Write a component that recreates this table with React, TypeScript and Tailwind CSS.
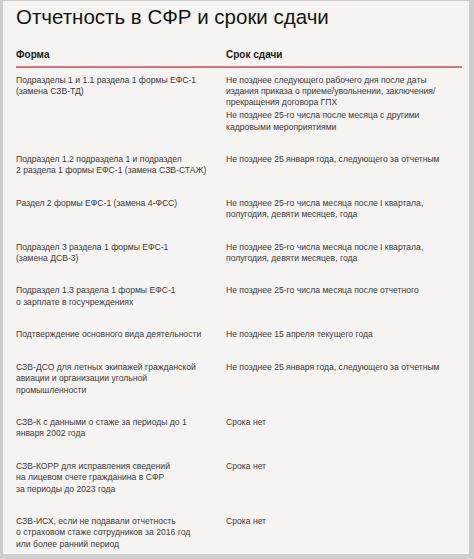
const ROWS: { form: string[]; deadline: string[][] }[] = [
  {
    form: ["Подразделы 1 и 1.1 раздела 1 формы ЕФС-1", "(замена СЗВ-ТД)"],
    deadline: [
      [
        "Не позднее следующего рабочего дня после даты",
        "издания приказа о приеме/увольнении, заключения/",
        "прекращения договора ГПХ",
      ],
      ["Не позднее 25-го числа после месяца с другими", "кадровыми мероприятиями"],
    ],
  },
  {
    form: ["Подраздел 1.2 подраздела 1 и подраздел", "2 раздела 1 формы ЕФС-1 (замена СЗВ-СТАЖ)"],
    deadline: [["Не позднее 25 января года, следующего за отчетным"]],
  },
  {
    form: ["Раздел 2 формы ЕФС-1 (замена 4-ФСС)"],
    deadline: [["Не позднее 25-го числа месяца после I квартала,", "полугодия, девяти месяцев, года"]],
  },
  {
    form: ["Подраздел 3 раздела 1 формы ЕФС-1", "(замена ДСВ-3)"],
    deadline: [["Не позднее 25-го числа месяца после I квартала,", "полугодия, девяти месяцев, года"]],
  },
  {
    form: ["Подраздел 1.3 раздела 1 формы ЕФС-1", "о зарплате в госучреждениях"],
    deadline: [["Не позднее 25-го числа месяца после отчетного"]],
  },
  {
    form: ["Подтверждение основного вида деятельности"],
    deadline: [["Не позднее 15 апреля текущего года"]],
  },
  {
    form: ["СЗВ-ДСО для летных экипажей гражданской", "авиации и организации угольной", "промышленности"],
    deadline: [["Не позднее 25 января года, следующего за отчетным"]],
  },
  {
    form: ["СЗВ-К с данными о стаже за периоды до 1", "января 2002 года"],
    deadline: [["Срока нет"]],
  },
  {
    form: ["СЗВ-КОРР для исправления сведений", "на лицевом счете гражданина в СФР", "за периоды до 2023 года"],
    deadline: [["Срока нет"]],
  },
  {
    form: [
      "СЗВ-ИСХ, если не подавали отчетность",
      "о страховом стаже сотрудников за 2016 год",
      "или более ранний период",
    ],
    deadline: [["Срока нет"]],
  },
];

export default function App() {
  return (
    <div className="h-[559px] w-[474px] overflow-hidden bg-[#cdcdcd] pt-px pl-[3px] pr-[5px] pb-[5px]">
      <div className="h-full bg-[#f5f4f2] pl-[13px] pr-[7px] font-['Liberation_Sans',Arial,sans-serif] text-[#3a3a3a]">
        <h1 className="pt-[2px] text-[20.5px] leading-[27px] text-[#141414]">
          Отчетность в СФР и сроки сдачи
        </h1>

        <div className="mt-[18px] grid grid-cols-[210px_1fr] border-b-2 border-[#d6767c] pb-[4px] text-[10px] font-bold leading-[14px] text-[#1a1a1a]">
          <span>Форма</span>
          <span>Срок сдачи</span>
        </div>

        <div className="-mt-[4px]">
          {ROWS.map((row, i) => (
            <div
              key={i}
              className="grid grid-cols-[210px_1fr] whitespace-nowrap py-[10.5px] text-[8.6px] leading-[11.4px]"
            >
              <div>
                {row.form.map((line, j) => (
                  <div key={j}>{line}</div>
                ))}
              </div>
              <div className="space-y-[1.5px]">
                {row.deadline.map((para, j) => (
                  <div key={j}>
                    {para.map((line, k) => (
                      <div key={k}>{line}</div>
                    ))}
                  </div>
                ))}
              </div>
            </div>
          ))}
        </div>
      </div>
    </div>
  );
}
